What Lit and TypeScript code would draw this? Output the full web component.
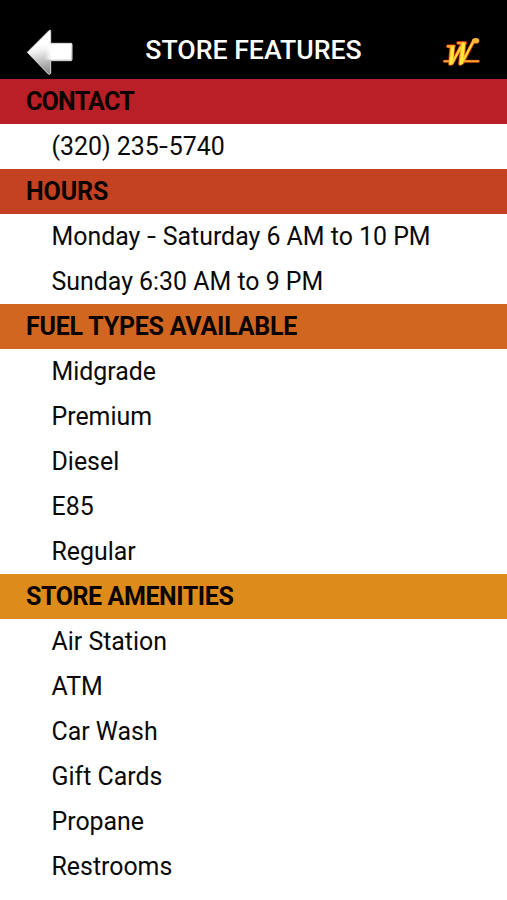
import { LitElement, html, css } from "lit";
import { customElement } from "lit/decorators.js";

interface Section {
  title: string;
  tone: string;
  items: string[];
}

const SECTIONS: Section[] = [
  { title: "CONTACT", tone: "red", items: ["(320) 235-5740"] },
  {
    title: "HOURS",
    tone: "vermilion",
    items: ["Monday - Saturday 6 AM to 10 PM", "Sunday 6:30 AM to 9 PM"],
  },
  {
    title: "FUEL TYPES AVAILABLE",
    tone: "orange",
    items: ["Midgrade", "Premium", "Diesel", "E85", "Regular"],
  },
  {
    title: "STORE AMENITIES",
    tone: "amber",
    items: ["Air Station", "ATM", "Car Wash", "Gift Cards", "Propane", "Restrooms"],
  },
];

// Widens the hyphen, which is short in this face.
const label = (text: string) =>
  text.split("-").map((part, i) => (i ? html`<span class="dash">-</span>${part}` : part));

@customElement("app-root")
export class AppRoot extends LitElement {
  static styles = css`
    :host {
      display: block;
      height: 900px;
      overflow: hidden;
      background: #fff;
      color: #0a0a0a;
      font-family: Roboto, sans-serif;
    }
    .header {
      display: flex;
      align-items: flex-start;
      justify-content: space-between;
      box-sizing: border-box;
      height: 79.4px;
      padding: 20px 12px 0 15px;
      background: #000;
      color: #fff;
    }
    .arrow {
      width: 70px;
      height: 59px;
    }
    .logo {
      width: 65px;
      height: 50px;
      margin-top: 5px;
    }
    .title {
      margin: 14px 0 0;
      padding-right: 8px;
      font-size: 26.7px;
      line-height: 32px;
      font-weight: 500;
      white-space: nowrap;
    }
    .band,
    .row {
      box-sizing: border-box;
      height: 44.96px;
      margin: 0;
      font-size: 24.9px;
      line-height: 45.4px;
      white-space: nowrap;
    }
    .band {
      padding-left: 26px;
      font-size: 25px;
      font-weight: 700;
      color: #0b0300;
    }
    .row {
      padding-left: 51.5px;
      font-weight: 400;
    }
    .dash {
      display: inline-block;
      width: 10px;
      transform: scaleX(1.3);
      transform-origin: 0 50%;
    }
    .red { background: #b81f26; letter-spacing: -0.75px; }
    .vermilion { background: #c44221; letter-spacing: -0.1px; }
    .orange { background: #d0661f; letter-spacing: -0.23px; }
    .amber { background: #dd8c1b; letter-spacing: -0.42px; }
    .list {
      margin: 0;
      padding: 0;
      list-style: none;
    }
  `;

  render() {
    return html`
      <header class="header">
        <svg class="arrow" viewBox="0 0 210 177">
          <defs>
            <linearGradient id="metal" gradientUnits="userSpaceOnUse" x1="85" y1="72" x2="104" y2="160">
              <stop offset="0" stop-color="#fff" />
              <stop offset="0.2" stop-color="#f0f0f0" />
              <stop offset="0.6" stop-color="#bbb" />
              <stop offset="1" stop-color="#888" />
            </linearGradient>
            <linearGradient id="shine" gradientUnits="userSpaceOnUse" x1="88" y1="0" x2="110" y2="0">
              <stop offset="0" stop-color="#fff" stop-opacity="0" />
              <stop offset="1" stop-color="#fff" />
            </linearGradient>
          </defs>
          <path
            d="M37 97 L103 31 Q107 29 107 34 V70 H169 Q171 70 171 73 V119 Q171 122 168 122 H107 V160 Q105 165 100 162 Z"
            fill="url(#metal)" stroke="#ddd" stroke-width="3" stroke-linejoin="round"
          />
          <path d="M88 72 H168 V119 H88 Z" fill="url(#shine)" />
        </svg>
        <h1 class="title">STORE FEATURES</h1>
        <svg class="logo" viewBox="0 0 195 150" fill="none" stroke-linejoin="round" stroke-linecap="round">
          <g stroke="#a82406">
            <path d="M43 109 H60 M98 109 H145" stroke-width="9" />
            <path d="M54 64 H72 M64 64 L60 117 M70 66 L66 116 L93 64 M84 54 H106 M96 58 L90 117 M103 58 L98 113 L130 50 H140" stroke-width="12" />
          </g>
          <g stroke="#ffa32a">
            <path d="M43 109 H60 M98 109 H145" stroke-width="6" />
            <path d="M54 64 H72 M64 66 L60 117 M70 66 L66 115 L93 64 M85 54 H105 M96 58 L90 117 M103 58 L97 113 L130 49" stroke-width="8" />
          </g>
          <path d="M68 68 L63 115 M100 58 L94 115" stroke="#ffec3c" stroke-width="9" />
          <path d="M68 112 L92 68 M98 110 L128 53" stroke="#ffd936" stroke-width="5" />
          <ellipse cx="137" cy="47" rx="11" ry="8" fill="#ffb236" />
        </svg>
      </header>
      <main>
        ${SECTIONS.map(
          (s) => html`
            <section>
              <h2 class="band ${s.tone}">${s.title}</h2>
              <ul class="list">
                ${s.items.map((i) => html`<li class="row">${label(i)}</li>`)}
              </ul>
            </section>
          `
        )}
      </main>
    `;
  }
}
